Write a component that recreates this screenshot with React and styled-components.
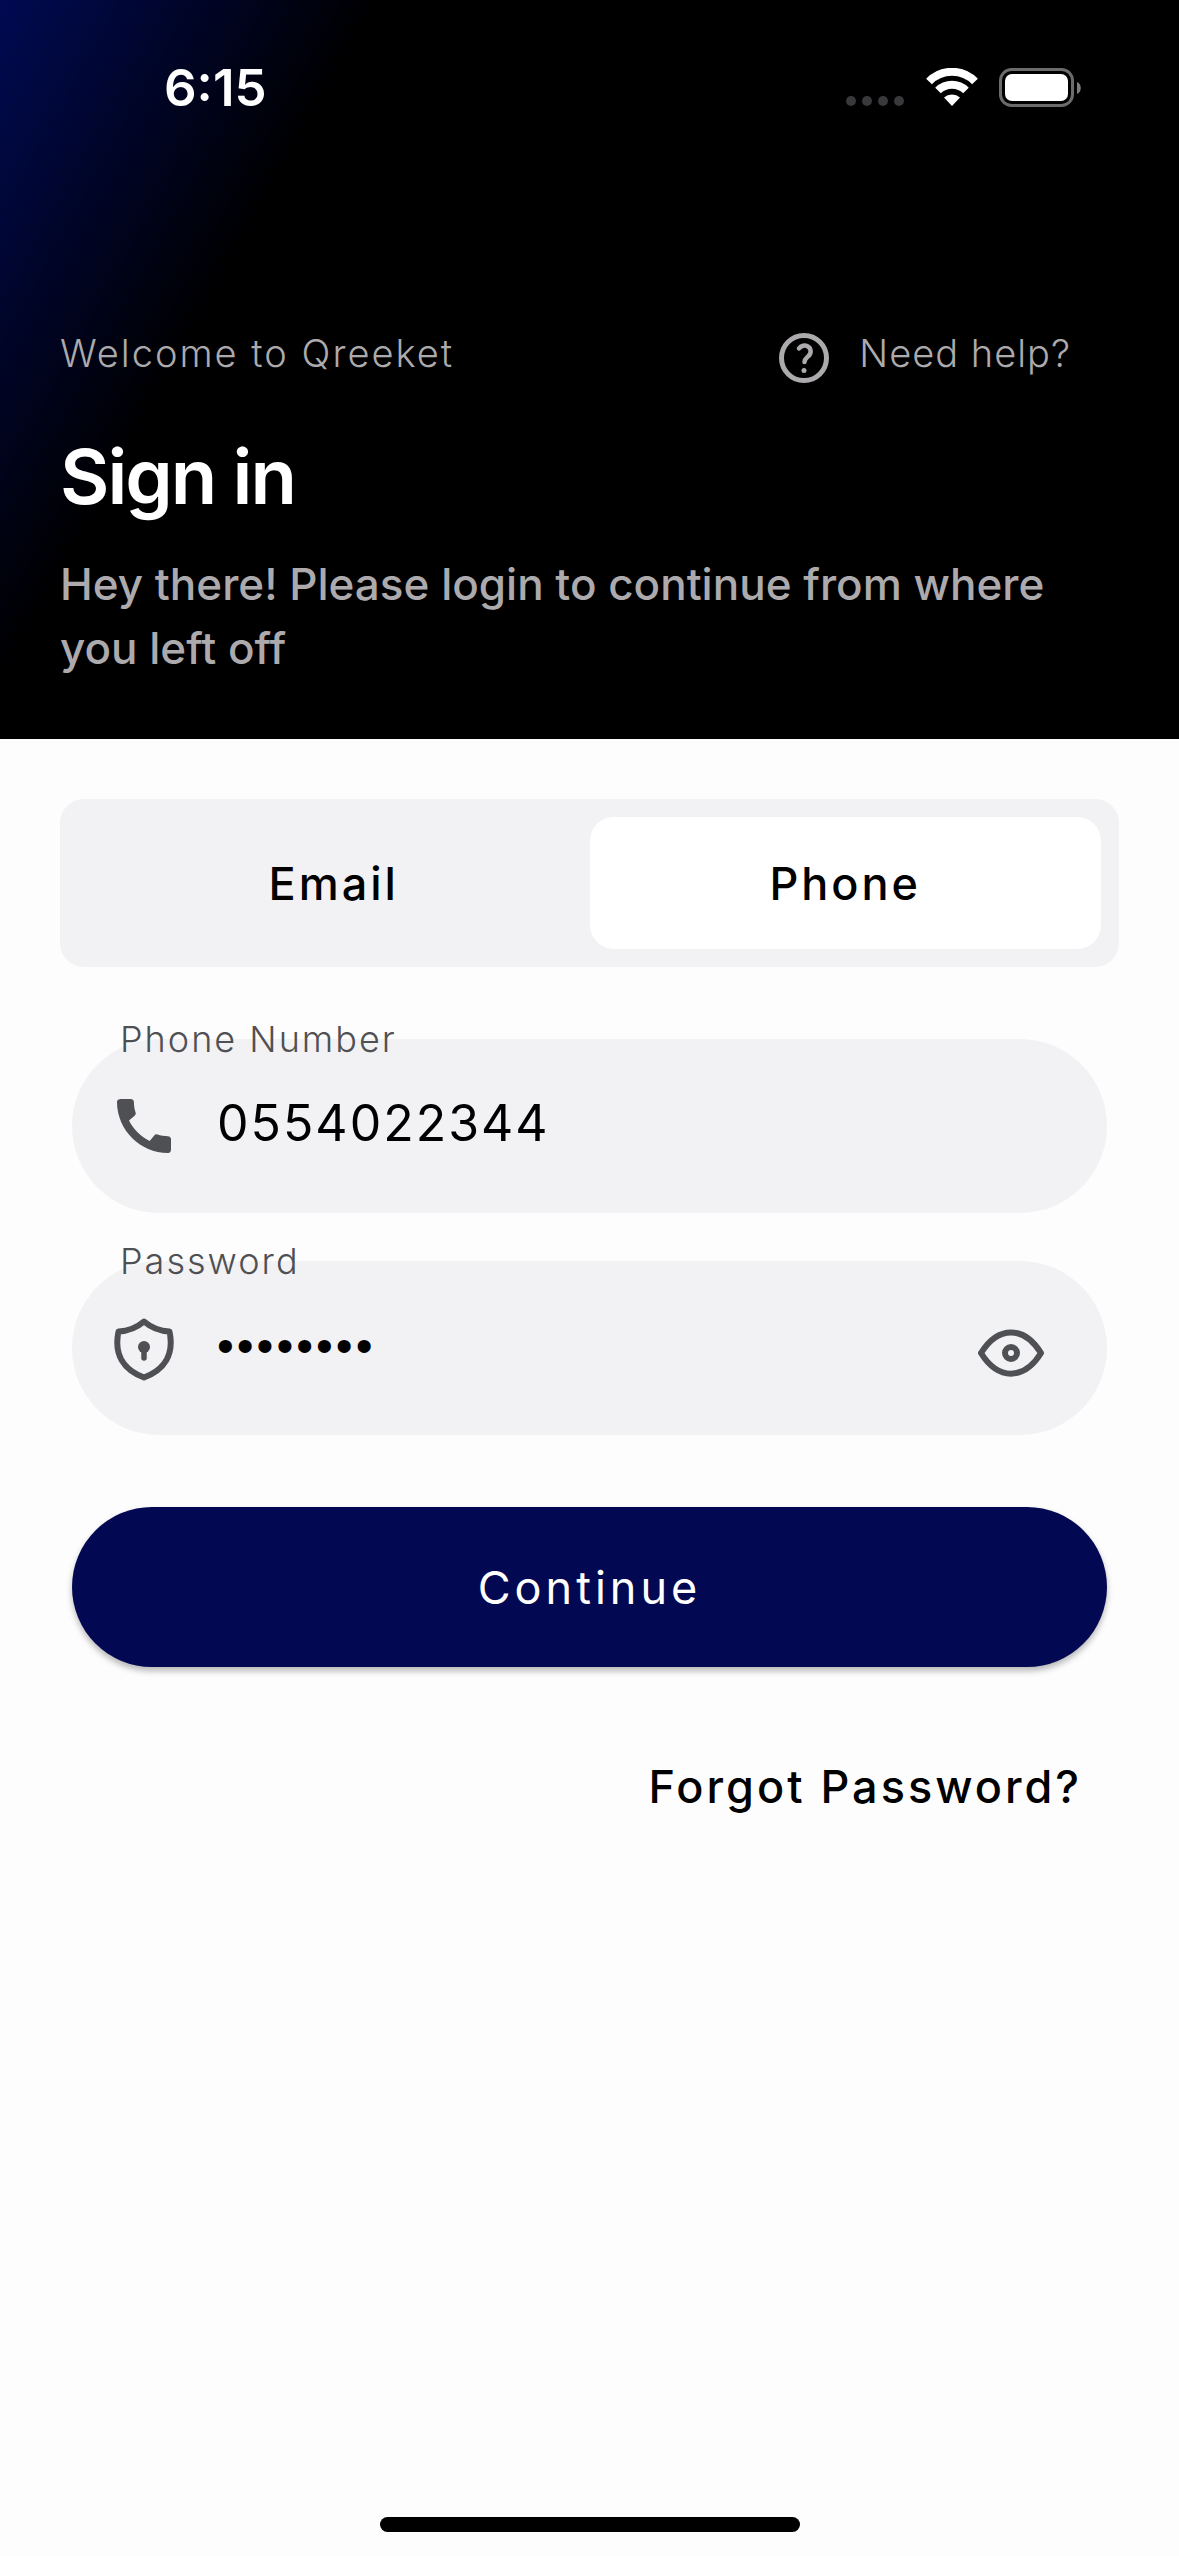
import React, { useState } from "react";
import styled, { createGlobalStyle } from "styled-components";

const GlobalStyle = createGlobalStyle`
  *, *::before, *::after { box-sizing: border-box; }
  body {
    margin: 0;
    background: #fdfdfd;
    color: #000;
    font-family: Inter, "Liberation Sans", sans-serif;
  }
  button, input { font: inherit; color: inherit; }
`;

const Page = styled.div`
  display: flex;
  flex-direction: column;
  min-height: 100vh;
`;

const Header = styled.header`
  background: linear-gradient(119deg, #000a52 0%, #000 24%);
  color: #fff;
  padding: 56px 60px 59px;
`;

const StatusBar = styled.div`
  display: flex;
  align-items: center;
  justify-content: space-between;
  height: 64px;
  padding: 0 38px 0 104px;
`;

const Clock = styled.time`
  font-size: 51px;
  line-height: 64px;
  font-weight: 600;
`;

const StatusIcons = styled.svg`
  display: block;
  width: 236px;
  height: 40px;
`;

const TopRow = styled.div`
  display: flex;
  align-items: center;
  justify-content: space-between;
  height: 60px;
  margin-top: 208px;
  padding-right: 48px;
  margin-bottom: 44px;
`;

const Muted = styled.span`
  color: #acaaad;
  font-size: 38px;
  line-height: 48px;
  font-weight: 300;
  letter-spacing: ${(p) => (p.$wide ? "2px" : "1px")};
  padding-bottom: 10px;
`;

const HelpLink = styled.a`
  display: flex;
  align-items: center;
  gap: 30px;
  color: #acaaad;
  text-decoration: none;
`;

const Title = styled.h1`
  margin: 0 0 32px;
  font-size: 76px;
  line-height: 88px;
  font-weight: 600;
  letter-spacing: -2px;
`;

const Subtitle = styled.p`
  margin: 0;
  color: #acaaad;
  font-size: 44px;
  line-height: 64px;
  font-weight: 500;
`;

const Form = styled.form`
  display: flex;
  flex-direction: column;
  padding: 60px 60px 0;
`;

const Tabs = styled.div`
  display: grid;
  grid-template-columns: 1fr 1fr;
  padding: 18px;
  border-radius: 24px;
  background: #f2f2f5;
`;

const Tab = styled.button`
  height: 132px;
  border: 0;
  border-radius: 24px;
  background: ${(p) => (p.$active ? "#fff" : "transparent")};
  font-size: 45px;
  font-weight: 500;
  letter-spacing: 3px;
`;

const Fields = styled.div`
  display: flex;
  flex-direction: column;
  gap: 48px;
  padding: 72px 12px 0;
`;

const Field = styled.div`
  position: relative;
  display: flex;
  align-items: center;
  height: 174px;
  padding: 0 62px 0 40px;
  border-radius: 87px;
  background: #f2f2f5;
  color: #4f5053;
`;

const Label = styled.label`
  position: absolute;
  left: 48px;
  top: -24px;
  font-size: 36px;
  line-height: 48px;
  font-weight: 300;
  letter-spacing: 2px;
`;

const Input = styled.input`
  flex: 1;
  min-width: 0;
  height: 80px;
  margin: 0 0 6px 39px;
  padding: 0;
  border: 0;
  outline: 0;
  background: transparent;
  color: #000;
  font-size: 50px;
  letter-spacing: 2px;

  &[type="password"] {
    font-family: "Liberation Sans", sans-serif;
    font-size: 48px;
    letter-spacing: 3px;
  }
`;

const IconButton = styled.button`
  display: flex;
  padding: 10px 0 0;
  border: 0;
  background: transparent;
`;

const Submit = styled.button`
  height: 160px;
  margin: 72px 12px 0;
  border: 0;
  border-radius: 80px;
  background: #030852;
  box-shadow: 0 4px 6px rgba(0, 0, 0, 0.28);
  color: #fff;
  font-size: 45px;
  font-weight: 400;
  letter-spacing: 4px;
`;

const Forgot = styled.a`
  align-self: flex-end;
  margin: 88px 37px 0 0;
  color: #000;
  font-size: 45px;
  line-height: 64px;
  font-weight: 500;
  letter-spacing: 3px;
  text-decoration: none;
`;

const HomeIndicator = styled.div`
  width: 420px;
  height: 15px;
  margin: auto auto 24px;
  border-radius: 8px;
  background: #000;
`;

function StatusGlyphs() {
  return (
    <StatusIcons viewBox="0 0 236 40" aria-hidden="true">
      <g fill="#39393b">
        <circle cx="6" cy="33" r="5" />
        <circle cx="22" cy="33" r="5" />
        <circle cx="38" cy="33" r="5" />
        <circle cx="54" cy="33" r="5" />
      </g>
      <g fill="none" stroke="#fff" strokeWidth="8">
        <path d="M84 13.500a32 32 0 0 1 46 0" />
        <path d="M93 22.500a20 20 0 0 1 28 0" />
      </g>
      <path fill="#fff" d="M99 29.500a12 12 0 0 1 16 0L107 38z" />
      <rect x="155.500" y="1.500" width="72" height="36" rx="11" fill="none" stroke="#6b6b6d" strokeWidth="3" />
      <rect x="160" y="6" width="63" height="27" rx="7" fill="#fff" />
      <path fill="#7d7d7f" d="M232 14c5 1.500 5 10.500 0 12z" />
    </StatusIcons>
  );
}

function HelpIcon() {
  return (
    <svg width="50" height="50" viewBox="0 0 50 50" fill="none" stroke="currentColor" strokeWidth="5" strokeLinecap="round" aria-hidden="true">
      <circle cx="25" cy="25" r="22.500" />
      <path strokeWidth="4.500" d="M20 15.500c2-3 6-3.600 8.500-2.300 4 2 4 7 1 9.800-2 2-4 3-4 6" />
      <circle cx="25" cy="37.500" r="2.500" fill="currentColor" stroke="none" />
    </svg>
  );
}

function PhoneIcon() {
  return (
    <svg width="66" height="72" viewBox="0 0 66 72" aria-hidden="true">
      <path
        fill="currentColor"
        transform="translate(-4 0) scale(3)"
        d="M20.010 15.380c-1.230 0-2.420-.2-3.530-.560-.350-.120-.740-.030-1.010.240l-1.570 1.970c-2.830-1.350-5.480-3.900-6.890-6.830l1.950-1.660c.270-.280.350-.670.240-1.020-.370-1.110-.560-2.300-.560-3.530 0-.540-.450-.990-.990-.990H4.190C3.650 3 3 3.240 3 3.990 3 13.280 10.730 21 20.010 21c.710 0 .990-.630.990-1.180v-3.450c0-.540-.450-.990-.990-.990z"
      />
    </svg>
  );
}

function ShieldIcon() {
  return (
    <svg width="66" height="66" viewBox="0 0 66 64" aria-hidden="true">
      <path
        fill="none"
        stroke="currentColor"
        strokeWidth="6"
        strokeLinejoin="round"
        d="M32 5.500c-7 6-15 9.500-25.500 10C1.500 39 12 54 32 61.500 52 54 62.500 39 57.500 15.500 47 15 39 11.500 32 5.500z"
      />
      <circle cx="32" cy="31" r="6" fill="currentColor" />
      <path stroke="currentColor" strokeWidth="5.500" strokeLinecap="round" d="M32 32v10" />
    </svg>
  );
}

function EyeIcon() {
  return (
    <svg width="68" height="50" viewBox="0 0 68 50" fill="none" stroke="currentColor" strokeWidth="6" aria-hidden="true">
      <path strokeLinejoin="round" d="M4 25C21-2.500 47-2.500 64 25 47 52.500 21 52.500 4 25z" />
      <circle cx="34" cy="25" r="6" />
    </svg>
  );
}

export default function App() {
  const [mode, setMode] = useState("phone");
  const [phone, setPhone] = useState("0554022344");
  const [password, setPassword] = useState("qreeket1");
  const [visible, setVisible] = useState(false);

  return (
    <Page>
      <GlobalStyle />
      <Header>
        <StatusBar>
          <Clock>6:15</Clock>
          <StatusGlyphs />
        </StatusBar>
        <TopRow>
          <Muted $wide>Welcome to Qreeket</Muted>
          <HelpLink href="#help">
            <HelpIcon />
            <Muted>Need help?</Muted>
          </HelpLink>
        </TopRow>
        <Title>Sign in</Title>
        <Subtitle>Hey there! Please login to continue from where you left off</Subtitle>
      </Header>
      <Form onSubmit={(e) => e.preventDefault()}>
        <Tabs>
          <Tab type="button" $active={mode === "email"} onClick={() => setMode("email")}>
            Email
          </Tab>
          <Tab type="button" $active={mode === "phone"} onClick={() => setMode("phone")}>
            Phone
          </Tab>
        </Tabs>
        <Fields>
          <Field>
            <Label htmlFor="phone">Phone Number</Label>
            <PhoneIcon />
            <Input id="phone" type="tel" value={phone} onChange={(e) => setPhone(e.target.value)} />
          </Field>
          <Field>
            <Label htmlFor="password">Password</Label>
            <ShieldIcon />
            <Input
              id="password"
              type={visible ? "text" : "password"}
              value={password}
              onChange={(e) => setPassword(e.target.value)}
            />
            <IconButton type="button" aria-label="Show password" onClick={() => setVisible(!visible)}>
              <EyeIcon />
            </IconButton>
          </Field>
        </Fields>
        <Submit type="submit">Continue</Submit>
        <Forgot href="#forgot">Forgot Password?</Forgot>
      </Form>
      <HomeIndicator />
    </Page>
  );
}
